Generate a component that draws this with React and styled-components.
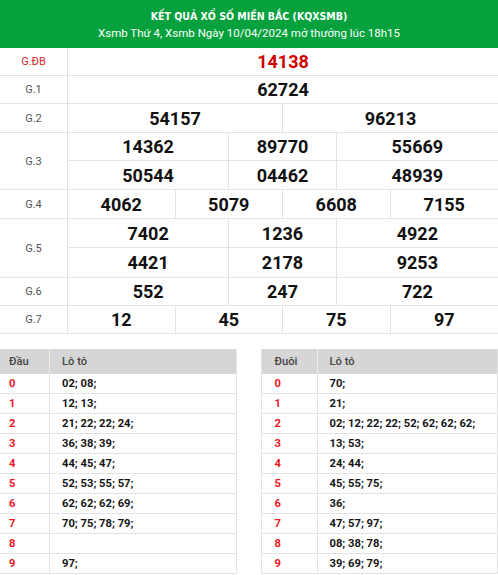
import React from 'react'
import styled, { createGlobalStyle } from 'styled-components'

const GlobalStyle = createGlobalStyle`
  body {
    margin: 0;
    font-family: Roboto, 'Liberation Sans', Arial, sans-serif;
    background: #fff;
  }
`

const Header = styled.div`
  background: #04a13c;
  color: #fff;
  text-align: center;
  height: 48px;
  display: flex;
  flex-direction: column;
  justify-content: center;
  gap: 4px;
`

const Title = styled.div`
  font-family: 'Liberation Sans Narrow', 'DejaVu Sans Condensed', sans-serif;
  font-size: 10.5px;
  font-weight: 700;
  padding-top: 2px;
`

const Subtitle = styled.div`
  font-size: 11.5px;
`

const PrizeRow = styled.div`
  display: flex;
  border-bottom: 1px solid #e3e3e3;
`

const Label = styled.div`
  width: 67px;
  flex: none;
  border-right: 1px solid #e3e3e3;
  display: flex;
  align-items: center;
  justify-content: center;
  font-size: 11px;
  color: ${p => (p.$special ? '#d8262b' : '#555')};
`

const Numbers = styled.div`
  flex: 1;
  display: grid;
  grid-template-columns: repeat(8, 1fr);
`

const Cell = styled.div`
  grid-column: span ${p => p.$span};
  height: ${p => p.$h}px;
  display: flex;
  align-items: center;
  justify-content: center;
  font-size: 18px;
  font-weight: 700;
  color: ${p => (p.$special ? '#d10000' : '#111')};
  border-right: ${p => (p.$last ? 'none' : '1px solid #e3e3e3')};
  border-top: ${p => (p.$top ? 'none' : '1px solid #e3e3e3')};
`

const prizes = [
  { label: 'G.ĐB', special: true, h: 27, spans: [8], rows: [['14138']] },
  { label: 'G.1', h: 27, spans: [8], rows: [['62724']] },
  { label: 'G.2', h: 28, spans: [4, 4], rows: [['54157', '96213']] },
  { label: 'G.3', h: 27, spans: [3, 2, 3], rows: [['14362', '89770', '55669'], ['50544', '04462', '48939']] },
  { label: 'G.4', h: 28, spans: [2, 2, 2, 2], rows: [['4062', '5079', '6608', '7155']] },
  { label: 'G.5', h: 28, spans: [3, 2, 3], rows: [['7402', '1236', '4922'], ['4421', '2178', '9253']] },
  { label: 'G.6', h: 27, spans: [3, 2, 3], rows: [['552', '247', '722']] },
  { label: 'G.7', h: 27, spans: [2, 2, 2, 2], rows: [['12', '45', '75', '97']] }
]

const Bottom = styled.div`
  display: flex;
  gap: 24px;
  margin-top: 15px;
`

const LotoTable = styled.div`
  width: 237px;
  border-left: ${p => (p.$right ? '1px solid #e3e3e3' : 'none')};
  border-right: 1px solid #e3e3e3;
  font-size: 11.2px;
`

const LotoRow = styled.div`
  display: flex;
  height: ${p => (p.$head ? 25 : 20)}px;
  background: ${p => (p.$head ? '#d6d6d6' : '#fff')};
  border-bottom: ${p => (p.$head ? 'none' : '1px solid #e3e3e3')};
  box-sizing: border-box;
`

const KeyCell = styled.div`
  width: ${p => p.$w}px;
  flex: none;
  box-sizing: border-box;
  padding-left: ${p => p.$pad}px;
  display: flex;
  align-items: center;
  border-right: 1px solid ${p => (p.$head ? '#ececec' : '#e3e3e3')};
  font-weight: ${p => (p.$head ? 500 : 700)};
  color: ${p => (p.$head ? '#444' : '#f0141e')};
`

const ValCell = styled.div`
  flex: 1;
  padding-left: 12px;
  display: flex;
  align-items: center;
  font-weight: ${p => (p.$head ? 500 : 700)};
  color: ${p => (p.$head ? '#444' : '#151515')};
  white-space: nowrap;
`

const dau = ['02; 08;', '12; 13;', '21; 22; 22; 24;', '36; 38; 39;', '44; 45; 47;', '52; 53; 55; 57;', '62; 62; 62; 69;', '70; 75; 78; 79;', '', '97;']
const duoi = ['70;', '21;', '02; 12; 22; 22; 52; 62; 62; 62;', '13; 53;', '24; 44;', '45; 55; 75;', '36;', '47; 57; 97;', '08; 38; 78;', '39; 69; 79;']

function Loto ({ title, items, right }) {
  const w = right ? 56 : 50
  const pad = right ? 13 : 9
  return (
    <LotoTable $right={right}>
      <LotoRow $head>
        <KeyCell $head $w={w} $pad={pad}>{title}</KeyCell>
        <ValCell $head>Lô tô</ValCell>
      </LotoRow>
      {items.map((v, i) => (
        <LotoRow key={i}>
          <KeyCell $w={w} $pad={pad}>{i}</KeyCell>
          <ValCell>{v}</ValCell>
        </LotoRow>
      ))}
    </LotoTable>
  )
}

export default function App () {
  return (
    <>
      <GlobalStyle />
      <Header>
        <Title>KẾT QUẢ XỔ SỐ MIỀN BẮC (KQXSMB)</Title>
        <Subtitle>Xsmb Thứ 4, Xsmb Ngày 10/04/2024 mở thưởng lúc 18h15</Subtitle>
      </Header>
      {prizes.map(p => (
        <PrizeRow key={p.label}>
          <Label $special={p.special}>{p.label}</Label>
          <Numbers>
            {p.rows.map((row, r) =>
              row.map((n, i) => (
                <Cell
                  key={r + '-' + i}
                  $span={p.spans[i]}
                  $h={r === 0 ? p.h : p.h + 1}
                  $top={r === 0}
                  $last={i === row.length - 1}
                  $special={p.special}>
                  {n}
                </Cell>
              ))
            )}
          </Numbers>
        </PrizeRow>
      ))}
      <Bottom>
        <Loto title='Đầu' items={dau} />
        <Loto title='Đuôi' items={duoi} right />
      </Bottom>
    </>
  )
}
